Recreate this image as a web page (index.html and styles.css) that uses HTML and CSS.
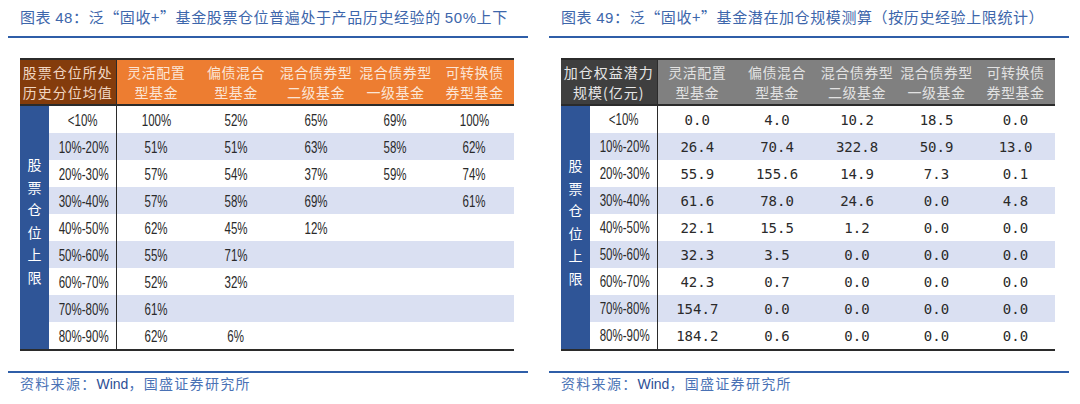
FILE: index.html
```html
<!DOCTYPE html>
<html lang="zh-CN">
<head>
<meta charset="utf-8">
<title>固收+ 基金股票仓位</title>
<link rel="stylesheet" href="styles.css">
</head>
<body>
<div class="page">
  <section class="panel">
    <h2 class="title">图表 <b>48</b>：泛“固收+”基金股票仓位普遍处于产品历史经验的 <b>50%</b>上下</h2>
    <table class="grid orange">
      <colgroup><col class="c-side"><col class="c-range"><col class="c-d"><col class="c-d"><col class="c-d"><col class="c-e"><col class="c-e"></colgroup>
      <thead>
        <tr>
          <th colspan="2" class="corner">股票仓位所处<br>历史分位均值</th>
          <th>灵活配置<br>型基金</th>
          <th>偏债混合<br>型基金</th>
          <th>混合债券型<br>二级基金</th>
          <th>混合债券型<br>一级基金</th>
          <th>可转换债<br>券型基金</th>
        </tr>
      </thead>
      <tbody class="pct">
        <tr><td class="side" rowspan="9"><span>股票仓位上限</span></td><td class="range"><span class="n">&lt;10%</span></td><td><span class="n">100%</span></td><td><span class="n">52%</span></td><td><span class="n">65%</span></td><td><span class="n">69%</span></td><td><span class="n">100%</span></td></tr>
        <tr class="alt"><td class="range"><span class="n">10%-20%</span></td><td><span class="n">51%</span></td><td><span class="n">51%</span></td><td><span class="n">63%</span></td><td><span class="n">58%</span></td><td><span class="n">62%</span></td></tr>
        <tr><td class="range"><span class="n">20%-30%</span></td><td><span class="n">57%</span></td><td><span class="n">54%</span></td><td><span class="n">37%</span></td><td><span class="n">59%</span></td><td><span class="n">74%</span></td></tr>
        <tr class="alt"><td class="range"><span class="n">30%-40%</span></td><td><span class="n">57%</span></td><td><span class="n">58%</span></td><td><span class="n">69%</span></td><td></td><td><span class="n">61%</span></td></tr>
        <tr><td class="range"><span class="n">40%-50%</span></td><td><span class="n">62%</span></td><td><span class="n">45%</span></td><td><span class="n">12%</span></td><td></td><td></td></tr>
        <tr class="alt"><td class="range"><span class="n">50%-60%</span></td><td><span class="n">55%</span></td><td><span class="n">71%</span></td><td></td><td></td><td></td></tr>
        <tr><td class="range"><span class="n">60%-70%</span></td><td><span class="n">52%</span></td><td><span class="n">32%</span></td><td></td><td></td><td></td></tr>
        <tr class="alt"><td class="range"><span class="n">70%-80%</span></td><td><span class="n">61%</span></td><td></td><td></td><td></td><td></td></tr>
        <tr><td class="range"><span class="n">80%-90%</span></td><td><span class="n">62%</span></td><td><span class="n">6%</span></td><td></td><td></td><td></td></tr>
      </tbody>
    </table>
    <p class="source">资料来源：<span class="en">Wind</span>，国盛证券研究所</p>
  </section>

  <section class="panel">
    <h2 class="title">图表 <b>49</b>：泛“固收+”基金潜在加仓规模测算（按历史经验上限统计）</h2>
    <table class="grid gray">
      <colgroup><col class="c-side"><col class="c-range"><col class="c-d"><col class="c-d"><col class="c-d"><col class="c-e"><col class="c-e"></colgroup>
      <thead>
        <tr>
          <th colspan="2" class="corner">加仓权益潜力<br>规模(亿元)</th>
          <th>灵活配置<br>型基金</th>
          <th>偏债混合<br>型基金</th>
          <th>混合债券型<br>二级基金</th>
          <th>混合债券型<br>一级基金</th>
          <th>可转换债<br>券型基金</th>
        </tr>
      </thead>
      <tbody class="num">
        <tr><td class="side" rowspan="9"><span>股票仓位上限</span></td><td class="range"><span class="n">&lt;10%</span></td><td>0.0</td><td>4.0</td><td>10.2</td><td>18.5</td><td>0.0</td></tr>
        <tr class="alt"><td class="range"><span class="n">10%-20%</span></td><td>26.4</td><td>70.4</td><td>322.8</td><td>50.9</td><td>13.0</td></tr>
        <tr><td class="range"><span class="n">20%-30%</span></td><td>55.9</td><td>155.6</td><td>14.9</td><td>7.3</td><td>0.1</td></tr>
        <tr class="alt"><td class="range"><span class="n">30%-40%</span></td><td>61.6</td><td>78.0</td><td>24.6</td><td>0.0</td><td>4.8</td></tr>
        <tr><td class="range"><span class="n">40%-50%</span></td><td>22.1</td><td>15.5</td><td>1.2</td><td>0.0</td><td>0.0</td></tr>
        <tr class="alt"><td class="range"><span class="n">50%-60%</span></td><td>32.3</td><td>3.5</td><td>0.0</td><td>0.0</td><td>0.0</td></tr>
        <tr><td class="range"><span class="n">60%-70%</span></td><td>42.3</td><td>0.7</td><td>0.0</td><td>0.0</td><td>0.0</td></tr>
        <tr class="alt"><td class="range"><span class="n">70%-80%</span></td><td>154.7</td><td>0.0</td><td>0.0</td><td>0.0</td><td>0.0</td></tr>
        <tr><td class="range"><span class="n">80%-90%</span></td><td>184.2</td><td>0.6</td><td>0.0</td><td>0.0</td><td>0.0</td></tr>
      </tbody>
    </table>
    <p class="source">资料来源：<span class="en">Wind</span>，国盛证券研究所</p>
  </section>
</div>
</body>
</html>
```

FILE: styles.css
```css
body {
  margin: 0;
  background: #ffffff;
  font-family: "Noto Sans CJK SC", sans-serif;
}

.page {
  display: flex;
  gap: 21px;
  padding: 7px 0 0 8px;
}

.panel {
  width: 520px;
}

.title {
  margin: 0;
  padding: 0 0 8px 12px;
  font-size: 15px;
  line-height: 20px;
  font-weight: normal;
  color: #3d66ab;
  letter-spacing: 0.6px;
  border-bottom: 2px solid #2f5ea8;
  white-space: nowrap;
}

.title b {
  font-family: "Liberation Sans", sans-serif;
  font-weight: normal;
}

.grid {
  margin: 20px 12px 0;
  width: 494px;
  border-collapse: collapse;
  table-layout: fixed;
  border-top: 2px solid #2b2b2b;
  border-bottom: 2px solid #2b2b2b;
}

.c-side { width: 29px; }
.c-range { width: 67px; }
.c-d { width: 80px; }
.c-e { width: 79px; }

.grid th {
  height: 44px;
  padding: 0;
  font-size: 14px;
  line-height: 20px;
  font-weight: normal;
  text-align: center;
  white-space: nowrap;
  letter-spacing: 0.5px;
}

.grid thead tr {
  border-bottom: 2px solid #2b2b2b;
}

.grid th.corner {
  letter-spacing: 1px;
  border-right: 1px solid #2b2b2b;
}

.orange th { background: #ed7d31; color: #fbe5d6; }
.orange th.corner { background: #843c0c; color: #f1d6c2; }

.gray th { background: #808080; color: #e2e2e2; }
.gray th.corner { background: #3f3f3f; color: #e6e6e6; }

.grid td {
  height: 27px;
  padding: 0;
  text-align: center;
  color: #2a2a2a;
  font-size: 14px;
  white-space: nowrap;
}

.grid tr.alt td {
  background: #dae0f2;
}

.grid td.side,
.grid tr.alt td.side {
  background: #2f5597;
  vertical-align: middle;
}

.side span {
  display: inline-block;
  writing-mode: vertical-rl;
  text-orientation: upright;
  letter-spacing: 8.5px;
  font-size: 14px;
  color: #ffffff;
  font-family: "Noto Sans CJK SC", sans-serif;
}

.grid td.range {
  border-right: 1px solid #2b2b2b;
}

.n {
  display: inline-block;
  font-family: "Liberation Sans", sans-serif;
  font-size: 16px;
  transform: scaleX(0.72);
  transform-origin: center;
}

.num td {
  font-family: "DejaVu Sans Mono", monospace;
  font-size: 14px;
}

.source {
  margin: 20px 0 0;
  padding: 0 0 0 12px;
  border-top: 2px solid #2f5ea8;
  font-size: 14px;
  line-height: 20px;
  color: #4a72b5;
  letter-spacing: 1.3px;
}

.source .en {
  font-family: "Liberation Sans", sans-serif;
  color: #2d4f95;
  letter-spacing: 0;
}
```
